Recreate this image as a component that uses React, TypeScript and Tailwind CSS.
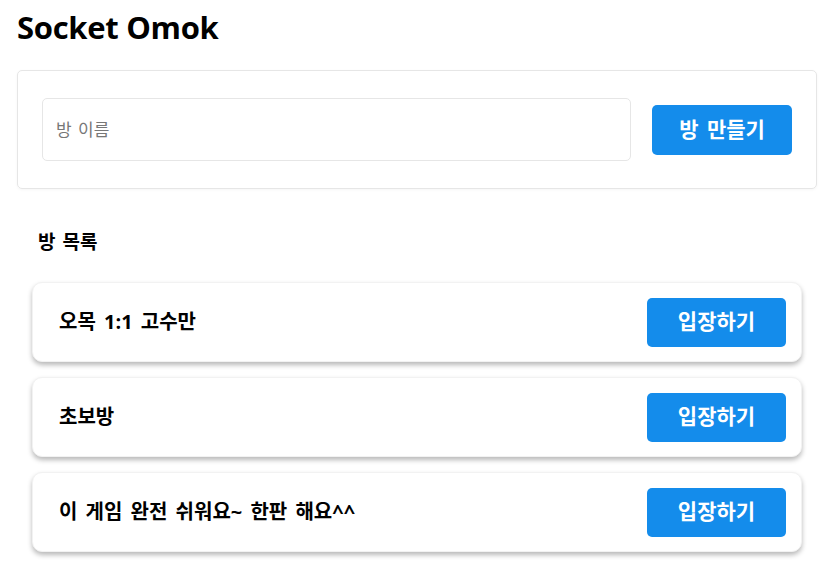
import React from "react";

const rooms = ["오목 1:1 고수만", "초보방", "이 게임 완전 쉬워요~ 한판 해요^^"];

const App = () => {
  return (
    <div
      className="min-h-screen bg-white text-black"
      style={{ fontFamily: '"Open Sans", "Noto Sans CJK KR", sans-serif' }}
    >
      <div className="w-[800px] ml-[17px]">
        <h1 className="text-[31px] font-bold leading-none pt-[12px] pb-[27px] tracking-[-0.3px]">
          Socket Omok
        </h1>

        <div className="flex items-center border border-[#e6e6e6] rounded-[5px] shadow-[0_1px_3px_rgba(0,0,0,0.04)] px-6 py-[27px]">
          <input
            placeholder="방 이름"
            className="flex-1 h-[63px] border border-[#e6e6e6] rounded-[5px] px-[13px] text-[17px] outline-none placeholder:text-[#777] [word-spacing:2px]"
          />
          <button className="ml-[21px] w-[140px] h-[50px] rounded-[5px] bg-[#148ceb] text-white text-[21px] font-bold [word-spacing:3px]">
            방 만들기
          </button>
        </div>

        <div className="mx-[15px] mt-[41px]">
          <h3 className="pl-[6px] text-[19px] font-bold leading-[24px] mb-[28px] [word-spacing:2px]">
            방 목록
          </h3>
          <div className="flex flex-col gap-[15px]">
            {rooms.map((name) => (
              <div
                key={name}
                className="flex items-center justify-between h-[80px] rounded-[10px] bg-white border border-[#f2f2f2] shadow-[0_3px_5px_rgba(0,0,0,0.28)] pl-[26px] pr-[15px]"
              >
                <span className="text-[20px] font-bold [word-spacing:3px]">{name}</span>
                <button className="w-[139px] h-[49px] rounded-[5px] bg-[#148ceb] text-white text-[21px] font-bold">
                  입장하기
                </button>
              </div>
            ))}
          </div>
        </div>
      </div>
    </div>
  );
};

export default App;
